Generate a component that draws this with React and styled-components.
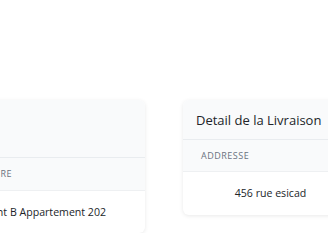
import React from "react";
import styled, { createGlobalStyle } from "styled-components";

const Global = createGlobalStyle`
  html, body { margin: 0; padding: 0; background: #ffffff; overflow: hidden; }
  body { font-family: "Open Sans", "Noto Sans", sans-serif; color: #212529; }
`;

const Page = styled.div`
  display: flex;
  align-items: flex-start;
  gap: 38px;
  padding-top: 100px;
  margin-left: -107px;
  width: max-content;
`;

const Card = styled.section`
  flex: 0 0 auto;
  width: ${(p) => p.$width}px;
  background: #ffffff;
  border-radius: 6px;
  box-shadow: 0 1px 4px rgba(0, 0, 0, 0.09);
  overflow: hidden;
`;

const CardHeader = styled.header`
  display: flex;
  flex-direction: column;
  justify-content: center;
  box-sizing: border-box;
  height: ${(p) => p.$height}px;
  padding: 0 13px;
  background: #f9fafb;
  border-bottom: 1px solid #e9ecef;
`;

const Title = styled.h2`
  margin: 0;
  font-size: 13px;
  font-weight: 400;
  line-height: 18px;
  color: #212529;
`;

const Subtitle = styled.div`
  font-size: 11px;
  line-height: 15px;
  color: #6b7280;
`;

const Table = styled.table`
  width: 100%;
  table-layout: fixed;
  border-collapse: collapse;
`;

const Th = styled.th`
  box-sizing: border-box;
  height: ${(p) => p.$height}px;
  padding: 0 18px;
  background: #f9fafb;
  border-bottom: 1px solid #eef0f2;
  text-align: left;
  font-size: 9px;
  font-weight: 400;
  letter-spacing: 0.5px;
  text-transform: uppercase;
  white-space: nowrap;
  color: #6b7280;
`;

const Td = styled.td`
  box-sizing: border-box;
  height: ${(p) => p.$height}px;
  padding: 0 12px;
  text-align: center;
  font-size: 10.6px;
  color: #212529;
  white-space: nowrap;
`;

export default function App() {
  return (
    <>
      <Global />
      <Page>
        <Card $width={252}>
          <CardHeader $height={58}>
            <Title>Facture</Title>
            <Subtitle>N° 0012</Subtitle>
          </CardHeader>
          <Table>
            <thead>
              <tr>
                <Th $height={32}>Adresse de facture</Th>
              </tr>
            </thead>
            <tbody>
              <tr>
                <Td $height={43}>Lot 4, Bâtiment B Appartement 202</Td>
              </tr>
            </tbody>
          </Table>
        </Card>
        <Card $width={175}>
          <CardHeader $height={40}>
            <Title>Detail de la Livraison</Title>
          </CardHeader>
          <Table>
            <thead>
              <tr>
                <Th $height={31}>Addresse</Th>
              </tr>
            </thead>
            <tbody>
              <tr>
                <Td $height={44}>456 rue esicad</Td>
              </tr>
            </tbody>
          </Table>
        </Card>
      </Page>
    </>
  );
}
